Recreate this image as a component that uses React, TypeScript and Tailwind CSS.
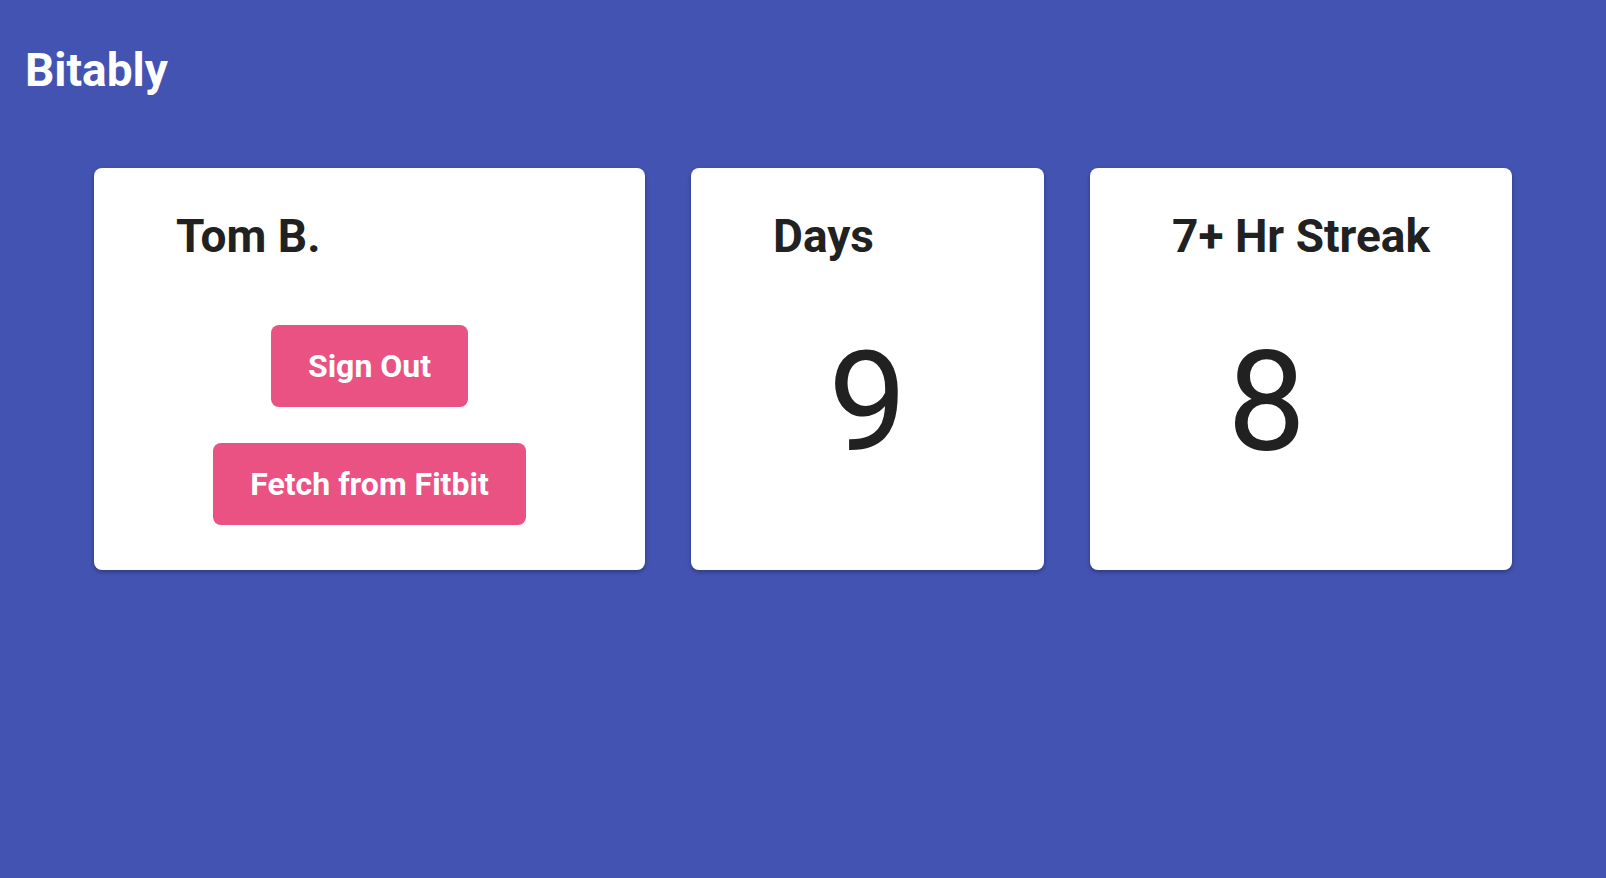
export default function App() {
  const stats = [
    { label: 'Days', value: 9, width: 'w-[353px]' },
    { label: '7+ Hr Streak', value: 8, width: 'w-[422px]' },
  ];

  return (
    <div className="min-h-screen bg-[#4353b1] [font-family:Roboto,sans-serif] text-[#212121]">
      {/* Header */}
      <header className="px-[25px] pt-[44px]">
        <h1 className="text-[46px] leading-[52px] font-bold text-white">Bitably</h1>
      </header>

      {/* Cards */}
      <div className="mt-[72px] flex justify-center gap-[46px]">
        <div className="w-[551px] bg-white rounded-lg shadow-[0_2px_4px_rgba(0,0,0,0.3)] pt-[42px] pb-[45px]">
          <h2 className="pl-[82px] text-[46px] leading-[52px] font-bold">Tom B.</h2>
          <div className="mt-[63px] flex flex-col items-center gap-[36px]">
            <button className="h-[82px] px-[37px] rounded-lg bg-[#ea5283] text-white text-[32px] font-bold">
              Sign Out
            </button>
            <button className="h-[82px] px-[37px] rounded-lg bg-[#ea5283] text-white text-[32px] font-bold">
              Fetch from Fitbit
            </button>
          </div>
        </div>

        {stats.map(stat => (
          <div
            key={stat.label}
            className={`${stat.width} bg-white rounded-lg shadow-[0_2px_4px_rgba(0,0,0,0.3)] pt-[42px] pl-[82px]`}
          >
            <h2 className="text-[46px] leading-[52px] font-bold whitespace-nowrap">{stat.label}</h2>
            <p className="mt-[70px] w-[189px] text-center text-[140px] leading-none font-normal">{stat.value}</p>
          </div>
        ))}
      </div>
    </div>
  );
}
